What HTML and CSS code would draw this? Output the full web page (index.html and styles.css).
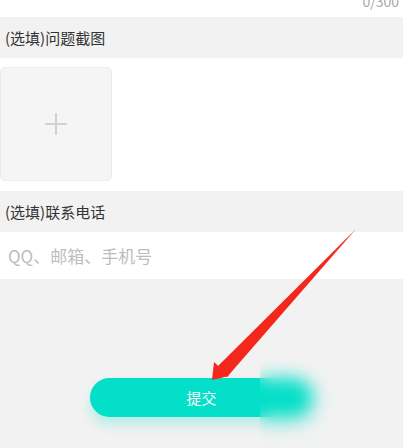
FILE: index.html
```html
<!DOCTYPE html>
<html lang="zh-CN">
<head>
<meta charset="utf-8">
<link rel="stylesheet" href="styles.css">
</head>
<body>
<div class="page">
  <div class="counter"><span class="count">0/300</span></div>
  <div class="section-title">(选填)问题截图</div>
  <div class="upload-area">
    <div class="upload-box">
      <svg class="plus" width="24" height="24" viewBox="0 0 24 24"><path d="M12 1v22M1 12h22" stroke="#d2d2d2" stroke-width="2" fill="none"/></svg>
    </div>
  </div>
  <div class="section-title">(选填)联系电话</div>
  <div class="input-row"><span class="placeholder">QQ、邮箱、手机号</span></div>
  <div class="bottom">
    <button class="submit">提交</button>
  </div>
  <svg class="arrow" width="403" height="448" viewBox="0 0 403 448">
    <path d="M356 229 L220 369 L227 377 Z" fill="#f4271c"/>
    <path d="M356 229 L218 366 L223 371 Z" fill="#f4271c"/>
    <path d="M212 380 L214 362 L229 376 Z" fill="#f4271c"/>
  </svg>
  <div class="blur"></div>
</div>
</body>
</html>
```

FILE: styles.css
```css
html, body {
  margin: 0;
  padding: 0;
  background: #f2f2f2;
}
.page {
  position: relative;
  width: 403px;
  height: 448px;
  overflow: hidden;
  font-family: "Noto Sans CJK SC", "Noto Sans", sans-serif;
}
.counter {
  height: 17px;
  background: #ffffff;
  overflow: hidden;
  text-align: right;
  padding-right: 4px;
}
.count {
  display: block;
  font-size: 14px;
  line-height: 16px;
  margin-top: -7px;
  color: #aaaaaa;
}
.section-title {
  height: 41px;
  background: #f2f2f2;
  display: flex;
  align-items: center;
  padding-left: 5px;
  font-size: 15px;
  color: #333333;
}
.upload-area {
  background: #ffffff;
  height: 133px;
  padding-top: 9px;
  box-sizing: border-box;
}
.upload-box {
  width: 112px;
  height: 114px;
  box-sizing: border-box;
  background: #f5f5f5;
  border: 1px solid #ececec;
  border-radius: 5px;
  display: flex;
  align-items: center;
  justify-content: center;
}
.input-row {
  height: 47px;
  background: #ffffff;
  display: flex;
  align-items: center;
  padding-left: 8px;
}
.placeholder {
  font-size: 17px;
  color: #bdbdbd;
}
.bottom {
  padding-top: 99px;
  display: flex;
  justify-content: center;
}
.submit {
  width: 223px;
  height: 39px;
  border: none;
  border-radius: 20px;
  background: #03dfc8;
  color: #ffffff;
  font-family: "Noto Sans CJK SC", "Noto Sans", sans-serif;
  font-size: 15px;
  box-shadow: 0 8px 12px rgba(3, 223, 200, 0.25);
  padding: 0;
}
.arrow {
  position: absolute;
  left: 0;
  top: 0;
}
.blur {
  position: absolute;
  left: 260px;
  top: 358px;
  width: 143px;
  height: 90px;
  backdrop-filter: blur(9px);
  -webkit-backdrop-filter: blur(9px);
}
```
